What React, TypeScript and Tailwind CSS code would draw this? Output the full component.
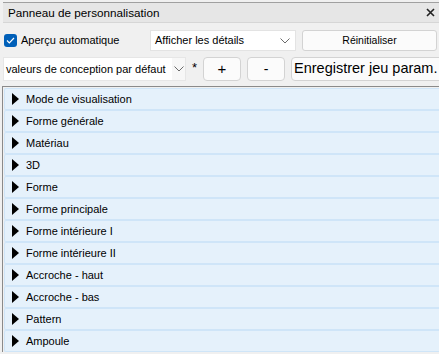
import React from "react";

const items = [
  "Mode de visualisation",
  "Forme générale",
  "Matériau",
  "3D",
  "Forme",
  "Forme principale",
  "Forme intérieure I",
  "Forme intérieure II",
  "Accroche - haut",
  "Accroche - bas",
  "Pattern",
  "Ampoule",
];

function Chevron() {
  return (
    <svg width="10" height="6" viewBox="0 0 10 6" className="shrink-0">
      <polyline points="0.5,0.5 5,5 9.5,0.5" fill="none" stroke="#6b6b6b" strokeWidth="1" />
    </svg>
  );
}

export default function App() {
  return (
    <div className="w-[439px] h-[354px] bg-[#f0f0f0] overflow-hidden font-['Liberation_Sans',Arial,sans-serif] text-black">
      <div className="h-[2px]" />
      {/* title bar */}
      <div className="ml-[3px] h-[21px] bg-[#e6e6e6] border-t border-[#a0a0a0] border-b border-b-[#d6d6d6] flex items-center pl-[5px] pr-[3px] text-[11.7px] leading-none">
        <span className="flex-1">Panneau de personnalisation</span>
        <svg width="9" height="9" viewBox="0 0 9 9" className="mr-[1px]">
          <path d="M1 1 L8 8 M8 1 L1 8" stroke="#222" strokeWidth="1.6" />
        </svg>
      </div>
      {/* row 1 */}
      <div className="mt-[7px] flex items-center h-[21px] text-[11px] whitespace-nowrap">
        <div className="ml-[4px] w-[13px] h-[13px] rounded-[3px] bg-[#005fb8] flex items-center justify-center shrink-0">
          <svg width="9" height="7" viewBox="0 0 9 7">
            <polyline points="1,3.5 3.3,5.8 8,1" fill="none" stroke="white" strokeWidth="1.2" />
          </svg>
        </div>
        <span className="ml-[4px] w-[129px]">Aperçu automatique</span>
        <div className="w-[146px] h-[21px] bg-white border border-[#e3e3e3] flex items-center pl-[4px] pr-[5px]">
          <span className="flex-1">Afficher les détails</span>
          <Chevron />
        </div>
        <div className="ml-[6px] flex-1 mr-[2px] h-[21px] bg-[#fbfbfb] border border-[#d3d3d3] rounded-[3px] flex items-center justify-center text-[10.5px]">
          Réinitialiser
        </div>
      </div>
      {/* row 2 */}
      <div className="mt-[6px] flex items-center h-[24px] text-[11px] whitespace-nowrap">
        <div className="ml-[3px] w-[183px] h-[24px] bg-[#f7f7f7] border border-[#e6e6e6] flex items-center shrink-0">
          <div className="w-[168px] h-full bg-white flex items-center pl-[2px] overflow-hidden">valeurs de conception par défaut</div>
          <div className="flex-1 flex justify-center">
            <Chevron />
          </div>
        </div>
        <span className="w-[17px] text-center text-[13px] leading-none shrink-0 pb-[4px]">*</span>
        <div className="w-[38px] h-[24px] bg-[#fbfbfb] border border-[#d3d3d3] rounded-[4px] flex items-center justify-center text-[15px] shrink-0">+</div>
        <div className="ml-[6px] w-[38px] h-[24px] bg-[#fbfbfb] border border-[#d3d3d3] rounded-[4px] flex items-center justify-center text-[14px] shrink-0">-</div>
        <div className="ml-[6px] w-[155px] shrink-0 h-[24px] bg-[#fbfbfb] border border-[#d3d3d3] rounded-[4px] flex items-center pl-[2px] text-[14.5px] overflow-hidden">
          Enregistrer jeu param.
        </div>
      </div>
      {/* list */}
      <div className="mt-[5px] ml-[2px] border-t border-l border-[#8a8a8a] pt-[1px] pl-[1px] text-[11px]">
        {items.map((t) => (
          <div
            key={t}
            className="h-[22px] bg-[#e5f1fb] border border-r-0 border-[#cfe5f8] rounded-l-[2px] flex items-center"
          >
            <svg width="7" height="12" viewBox="0 0 7 12" className="ml-[7px]">
              <polygon points="0,0 7,6 0,12" fill="#000" />
            </svg>
            <span className="ml-[7px]">{t}</span>
          </div>
        ))}
      </div>
    </div>
  );
}
